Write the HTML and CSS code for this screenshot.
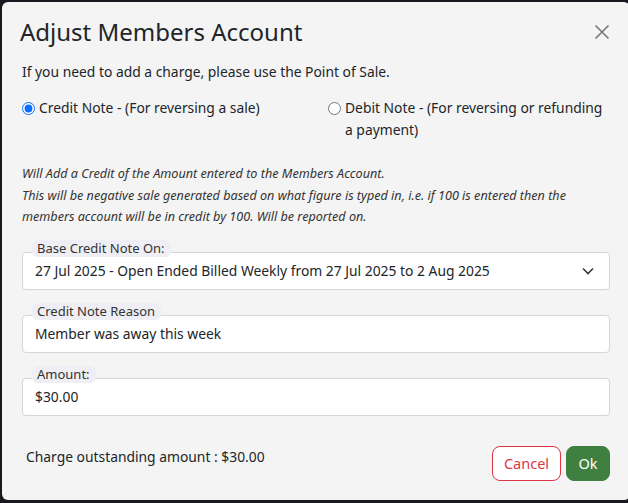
FILE: index.html
```html
<!DOCTYPE html>
<html lang="en">
<head>
    <meta charset="UTF-8">
    <title>Adjust Members Account</title>
    <link rel="stylesheet" href="styles.css">
</head>
<body>

<div class="modal">
    <div class="modal-header">
        <h2 class="modal-title">Adjust Members Account</h2>
        <button class="close" aria-label="Close">
            <svg width="16" height="16" viewBox="0 0 16 16">
                <path d="M1.5 1.5 L14.5 14.5 M14.5 1.5 L1.5 14.5" stroke="#777" stroke-width="1.6" fill="none"/>
            </svg>
        </button>
    </div>

    <div class="modal-body">
        <p class="intro">If you need to add a charge, please use the Point of Sale.</p>

        <div class="note-types">
            <label class="radio">
                <input type="radio" name="noteType" checked>
                <span>Credit Note - (For reversing a sale)</span>
            </label>
            <label class="radio">
                <input type="radio" name="noteType">
                <span>Debit Note - (For reversing or refunding a payment)</span>
            </label>
        </div>

        <p class="hint">
            Will Add a Credit of the Amount entered to the Members Account.<br>
            This will be negative sale generated based on what figure is typed in, i.e. if 100 is entered then the members account will be in credit by 100. Will be reported on.
        </p>

        <div class="field">
            <label class="field-label">Base Credit Note On:</label>
            <div class="select">
                <span>27 Jul 2025 - Open Ended Billed Weekly from 27 Jul 2025 to 2 Aug 2025</span>
                <svg width="12" height="8" viewBox="0 0 12 8">
                    <path d="M1 1.5 L6 6.5 L11 1.5" stroke="#343a40" stroke-width="1.6" fill="none"/>
                </svg>
            </div>
        </div>

        <div class="field">
            <label class="field-label">Credit Note Reason</label>
            <input class="control" type="text" value="Member was away this week">
        </div>

        <div class="field">
            <label class="field-label">Amount:</label>
            <input class="control" type="text" value="$30.00">
        </div>
    </div>

    <div class="modal-footer">
        <span class="outstanding">Charge outstanding amount : $30.00</span>
        <div class="actions">
            <button class="btn btn-cancel">Cancel</button>
            <button class="btn btn-ok">Ok</button>
        </div>
    </div>
</div>

</body>
</html>
```

FILE: styles.css
```css
body {
    margin: 0;
    height: 503px;
    overflow: hidden;
    background: #17191e;
    font-family: 'Noto Sans', 'Open Sans', sans-serif;
    color: #212529;
}

.modal {
    margin: 2px 0 0 2px;
    width: 628px;
    height: 498px;
    box-sizing: border-box;
    background: #f4f4f4;
    border-radius: 6px;
    display: flex;
    flex-direction: column;
}

.modal-header {
    display: flex;
    align-items: center;
    justify-content: space-between;
    padding: 15px 20px 0 18px;
}

.modal-title {
    margin: 0;
    font-size: 24px;
    font-weight: 400;
    line-height: 29px;
}

.close {
    border: none;
    background: none;
    padding: 0;
    width: 16px;
    height: 16px;
    cursor: pointer;
}

.modal-body {
    padding: 16px 20px 0 20px;
    font-size: 13.85px;
}

.intro {
    margin: 0;
    line-height: 20px;
}

.note-types {
    display: flex;
    margin-top: 15px;
}

.radio {
    display: flex;
    align-items: flex-start;
    line-height: 22px;
}

.radio:first-child {
    width: 306px;
    flex: none;
}

.radio:last-child {
    flex: 1;
}

.radio input {
    margin: 5px 4px 0 0;
    width: 13px;
    height: 13px;
    accent-color: #0d6efd;
    flex: none;
}

.hint {
    margin: 22px 0 0 0;
    font-size: 12.62px;
    font-style: italic;
    line-height: 21.5px;
    color: #333;
}

.field {
    position: relative;
    margin-top: 24px;
}

.field + .field {
    margin-top: 25px;
}

.field-label {
    position: absolute;
    left: 10px;
    top: -12px;
    padding: 0 6px 0 5px;
    font-size: 13px;
    line-height: 17px;
    color: #333;
    background: #eeeef4;
    border-radius: 6px;
}

.select,
.control {
    box-sizing: border-box;
    width: 100%;
    height: 38px;
    border: 1px solid #d2d5da;
    border-radius: 4px;
    background: #fff;
    font-family: inherit;
    font-size: 13.85px;
    color: #212529;
}

.select {
    display: flex;
    align-items: center;
    justify-content: space-between;
    padding: 0 15px 0 12px;
}

.control {
    display: block;
    padding: 0 12px;
    outline: none;
}

.modal-footer {
    display: flex;
    justify-content: space-between;
    align-items: flex-start;
    padding: 30px 20px 0 24px;
}

.outstanding {
    font-size: 13.85px;
    margin-top: 1px;
}

.actions {
    display: flex;
    gap: 5px;
}

.btn {
    height: 35px;
    padding: 0 12px;
    border-radius: 8px;
    font-family: inherit;
    font-size: 14.5px;
    cursor: pointer;
}

.btn-cancel {
    width: 69px;
    padding: 0;
    background: #fff;
    color: #dc3545;
    border: 1px solid #dc3545;
}

.btn-ok {
    width: 44px;
    padding: 0;
    background: #3f7f3f;
    color: #fff;
    border: 1px solid #3f7f3f;
}
```
